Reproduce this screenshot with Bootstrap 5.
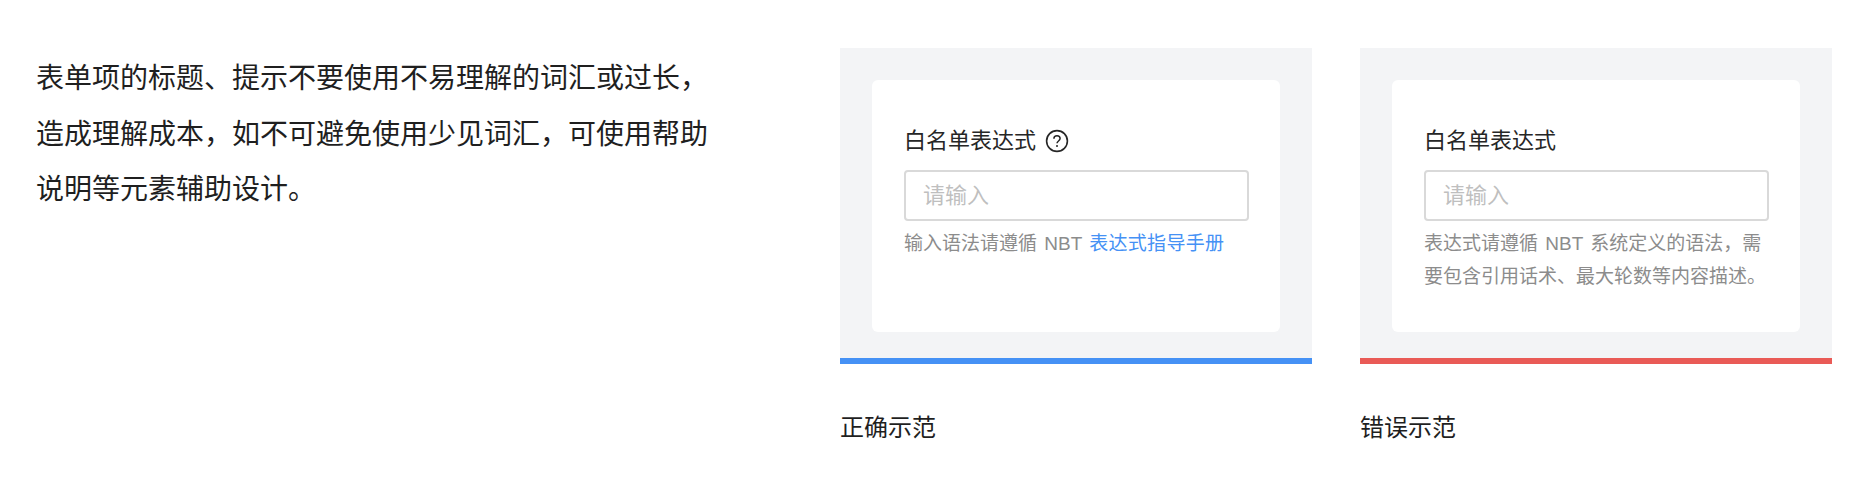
<!DOCTYPE html>
<html lang="zh-CN">
<head>
    <meta charset="UTF-8">
    <meta name="viewport" content="width=device-width, initial-scale=1">
    <title>表单项文案规范</title>
    <link rel="stylesheet" href="https://cdn.jsdelivr.net/npm/bootstrap@5.3.0/dist/css/bootstrap.min.css">
    <style>
        body {
            background-color: #fff;
            color: #1f1f1f;
            font-family: "Liberation Sans", "Noto Sans CJK SC", sans-serif;
            font-weight: 400;
        }
        .page-wrap {
            padding: 48px 36px 0 36px;
        }
        .guide-col {
            width: 804px;
        }
        .guide-text {
            width: 680px;
            font-size: 28px;
            line-height: 55.5px;
            margin: 0;
            padding-top: 3px;
        }
        .demo-col {
            width: 472px;
        }
        .demo-panel {
            background: #f3f4f6;
            padding: 32px;
            height: 316px;
            border-bottom: 6px solid #4591f5;
        }
        .demo-panel.is-wrong {
            border-bottom-color: #e95a56;
        }
        .demo-card {
            border: none;
            border-radius: 6px;
            height: 252px;
            padding: 45px 31px 40px 32px;
        }
        .demo-label {
            font-size: 22px;
            line-height: 32px;
            margin-bottom: 13px;
            color: #262626;
            gap: 9px;
        }
        .demo-input {
            height: 51px;
            font-size: 22px;
            border: 2px solid #d9d9d9;
            border-radius: 4px;
            padding: 0 17px;
        }
        .demo-input::placeholder {
            color: #bfbfbf;
        }
        .demo-hint {
            font-size: 19px;
            line-height: 32.5px;
            margin-top: 7px;
            color: #8c8c8c;
            word-spacing: 2px;
        }
        .demo-hint a {
            color: #4591f5;
            text-decoration: none;
            letter-spacing: .3px;
        }
        .demo-caption {
            font-size: 24px;
            line-height: 32px;
            margin-top: 48px;
        }
    </style>
</head>
<body>
    <div class="page-wrap d-flex">
        <div class="guide-col">
            <p class="guide-text">表单项的标题、提示不要使用不易理解的词汇或过长，造成理解成本，如不可避免使用少见词汇，可使用帮助说明等元素辅助设计。</p>
        </div>
        <div class="d-flex" style="gap: 48px">
            <div class="demo-col">
                <div class="demo-panel">
                    <div class="card demo-card">
                        <label class="demo-label d-flex align-items-center">白名单表达式
                            <svg width="24" height="24" viewBox="0 0 24 24" fill="none" stroke="#262626">
                                <circle cx="12" cy="12" r="10.4" stroke-width="1.6"/>
                                <path d="M8.9 9.8c0-1.8 1.3-3 3.1-3s3.1 1.1 3.1 2.8c0 2.4-3.1 2.4-3.1 4.7" stroke-width="1.5"/>
                                <circle cx="12" cy="17" r="1" fill="#262626" stroke="none"/>
                            </svg>
                        </label>
                        <input type="text" class="form-control demo-input flex-shrink-0" placeholder="请输入">
                        <div class="demo-hint">输入语法请遵循 NBT <a href="#">表达式指导手册</a></div>
                    </div>
                </div>
                <div class="demo-caption">正确示范</div>
            </div>
            <div class="demo-col">
                <div class="demo-panel is-wrong">
                    <div class="card demo-card">
                        <label class="demo-label d-flex align-items-center">白名单表达式</label>
                        <input type="text" class="form-control demo-input flex-shrink-0" placeholder="请输入">
                        <div class="demo-hint">表达式请遵循 NBT 系统定义的语法，需要包含引用话术、最大轮数等内容描述。</div>
                    </div>
                </div>
                <div class="demo-caption">错误示范</div>
            </div>
        </div>
    </div>
    <script src="https://cdn.jsdelivr.net/npm/bootstrap@5.3.0/dist/js/bootstrap.bundle.min.js"></script>
</body>
</html>
